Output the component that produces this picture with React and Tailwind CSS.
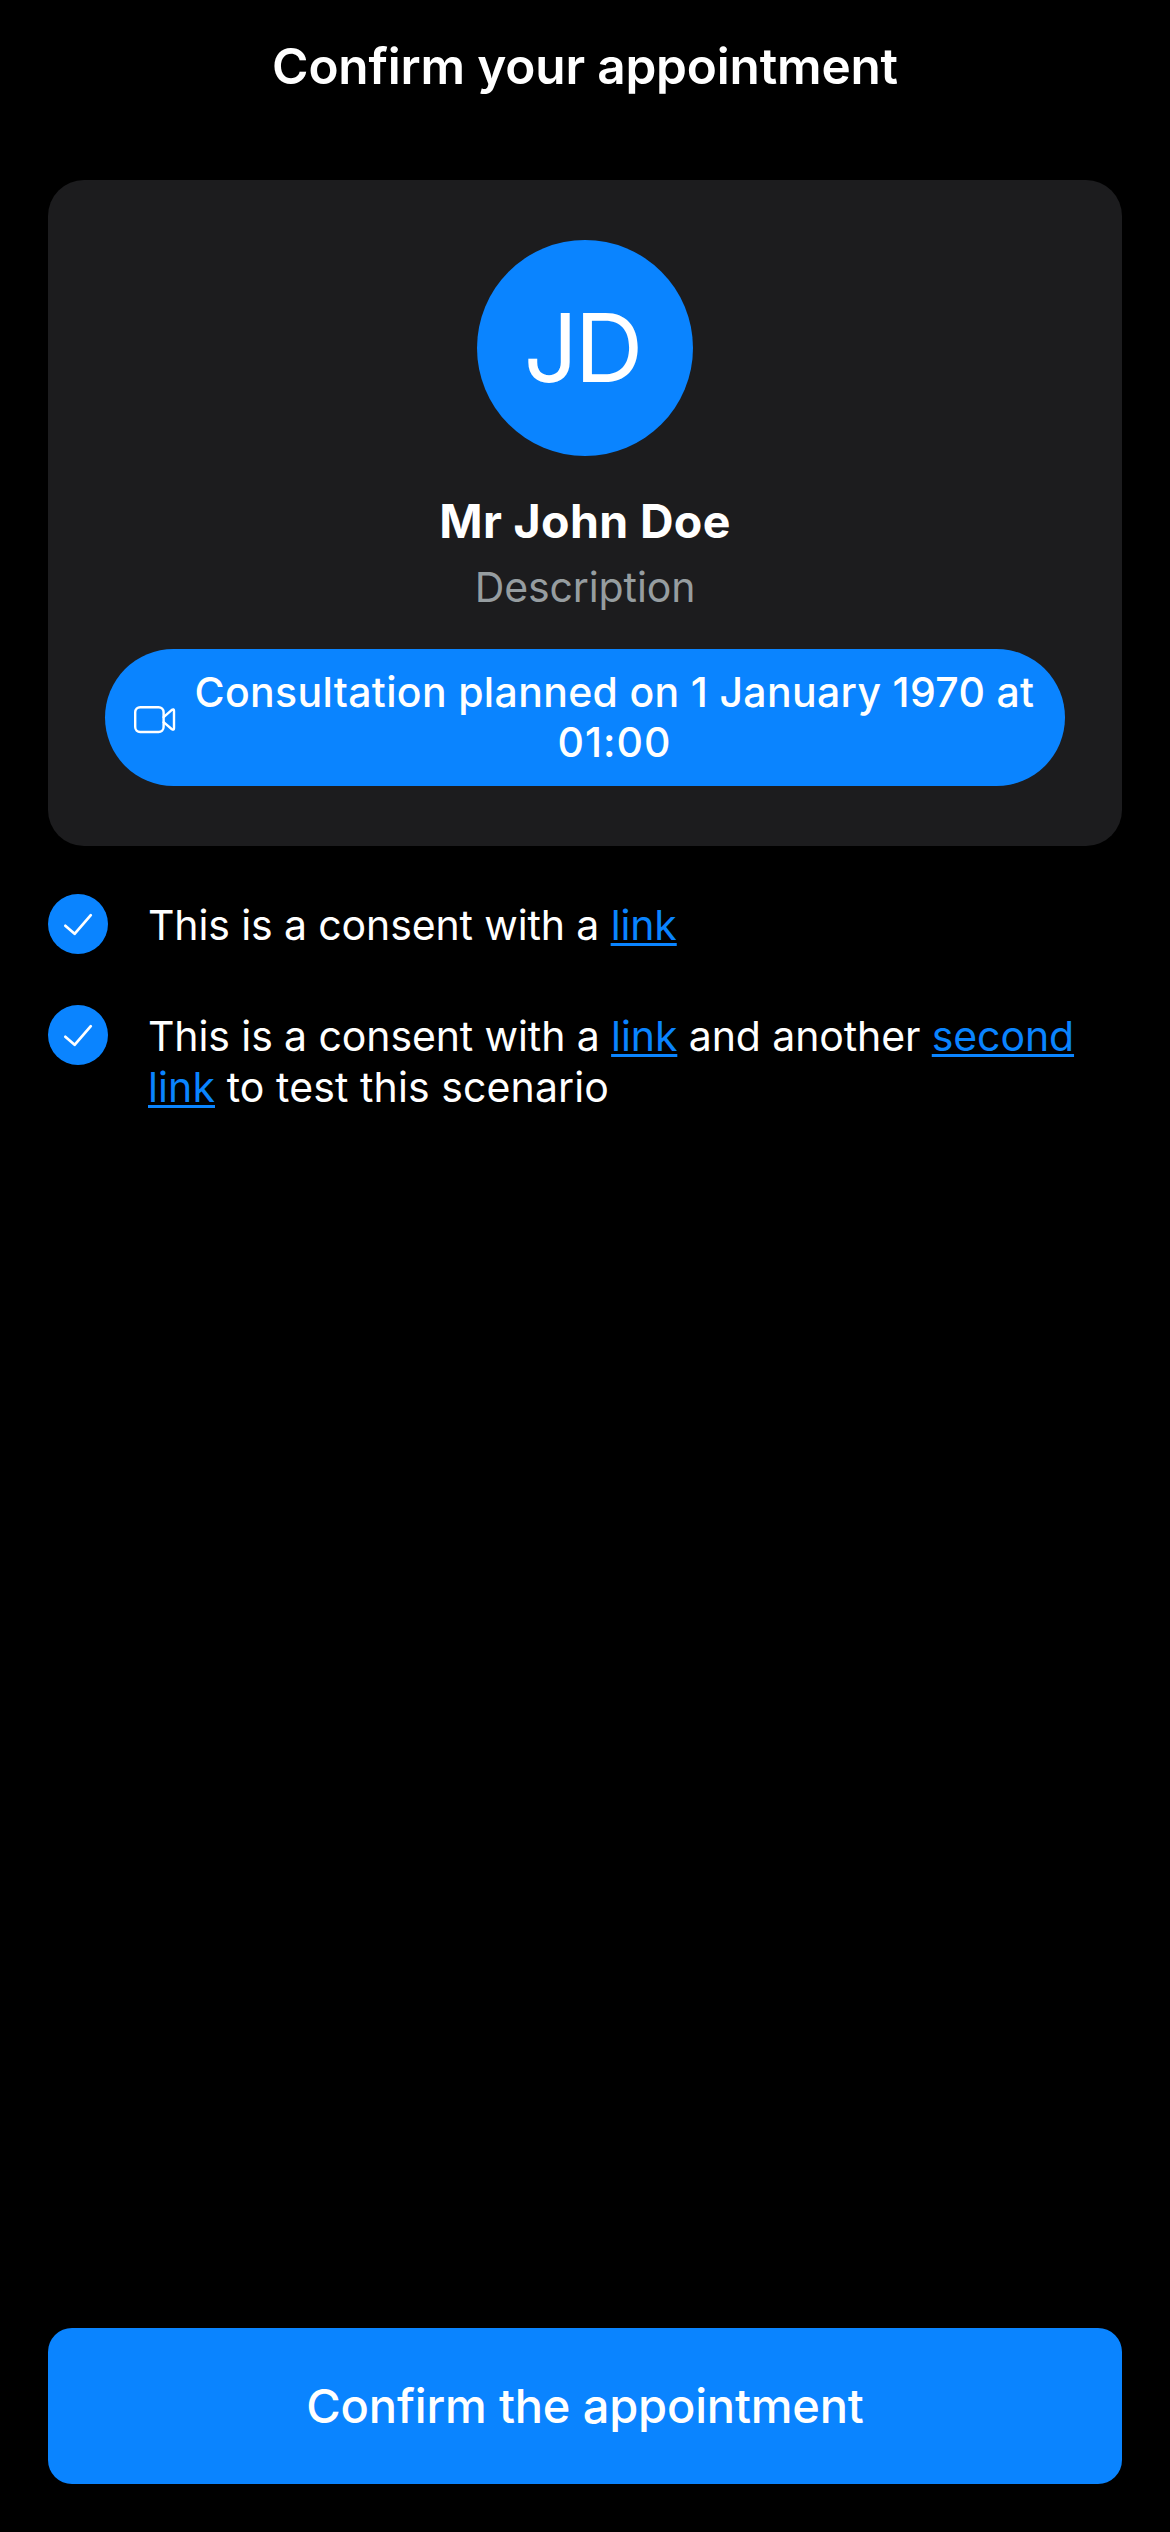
import React from 'react';

function VideoIcon() {
  return (
    <svg width="42" height="28" viewBox="0 0 42 28" fill="none" stroke="white" strokeWidth="2.4" strokeLinejoin="round" strokeLinecap="round" className="mt-[5px] shrink-0">
      <rect x="1.2" y="1.2" width="28.4" height="24.8" rx="5" />
      <path d="M29.6 11.2 37.6 4.1Q40 2.4 40 4.8V22.2Q40 24.6 37.6 23L29.6 16.2" />
    </svg>
  );
}

function CheckBadge() {
  return (
    <div className="size-[60px] shrink-0 rounded-full bg-[#0a84ff]">
      <svg width="60" height="60" viewBox="0 0 60 60" fill="none" stroke="white" strokeWidth="2.7" strokeLinejoin="round" strokeLinecap="round">
        <path d="M17.3 31.8 26.6 39.8 42.8 21.2" />
      </svg>
    </div>
  );
}

function Link({ children }) {
  return (
    <a className="text-[#0a84ff] underline decoration-[3px] underline-offset-[3px] [text-decoration-skip-ink:none]">
      {children}
    </a>
  );
}

function Consent({ children }) {
  return (
    <div className="flex items-start">
      <CheckBadge />
      <p className="ml-[40px] pt-[6px] text-[41px] leading-[51px] whitespace-nowrap text-white">{children}</p>
    </div>
  );
}

export default function App() {
  return (
    <main className="flex h-[2532px] w-[1170px] flex-col bg-black px-12 pb-12 font-['Inter',sans-serif] text-white">
      <header className="flex h-[132px] items-center justify-center">
        <h1 className="text-[49.5px] leading-[60px] font-semibold tracking-[-0.175px]">Confirm your appointment</h1>
      </header>

      <section className="mt-12 flex flex-col items-center rounded-[36px] bg-[#1c1c1e] pt-[60px] pb-[60px]">
        <div className="flex size-[216px] items-center justify-center rounded-full bg-[#0a84ff] pr-[9px] pb-px">
          <span className="-mr-[3px] text-[95px] leading-[110px] tracking-[-3.2px]">JD</span>
        </div>
        <h2 className="mt-9 text-[46.5px] leading-[58px] font-bold tracking-[0.35px]">Mr John Doe</h2>
        <p className="mt-3 text-[41px] leading-[50px] tracking-[-0.11px] text-[#969da0]">Description</p>
        <div className="mt-[37px] flex h-[137px] w-[960px] items-center rounded-full bg-[#0a84ff] pl-[29px]">
          <VideoIcon />
          <p className="ml-[18px] w-[841px] pb-0.5 text-center text-[41px] leading-[50px] font-medium whitespace-nowrap">
            <span className="block tracking-[0.333px]">Consultation planned on 1 January 1970 at</span>
            <span className="block tracking-[1.03px]">01:00</span>
          </p>
        </div>
      </section>

      <div className="mt-12 flex flex-col gap-[51px]">
        <Consent>
          <span className="block tracking-[-0.12px]">
            This is a consent with a <Link>link</Link>
          </span>
        </Consent>
        <Consent>
          <span className="block tracking-[-0.101px]">
            This is a consent with a <Link>link</Link> and another <Link>second</Link>
          </span>
          <span className="block tracking-[0.1px]">
            <Link>link</Link> to test this scenario
          </span>
        </Consent>
      </div>

      <button className="mt-auto flex h-[156px] items-center justify-center rounded-[24px] bg-[#0a84ff] text-[47px] leading-[60px] font-medium tracking-[-0.176px]">
        Confirm the appointment
      </button>
    </main>
  );
}
